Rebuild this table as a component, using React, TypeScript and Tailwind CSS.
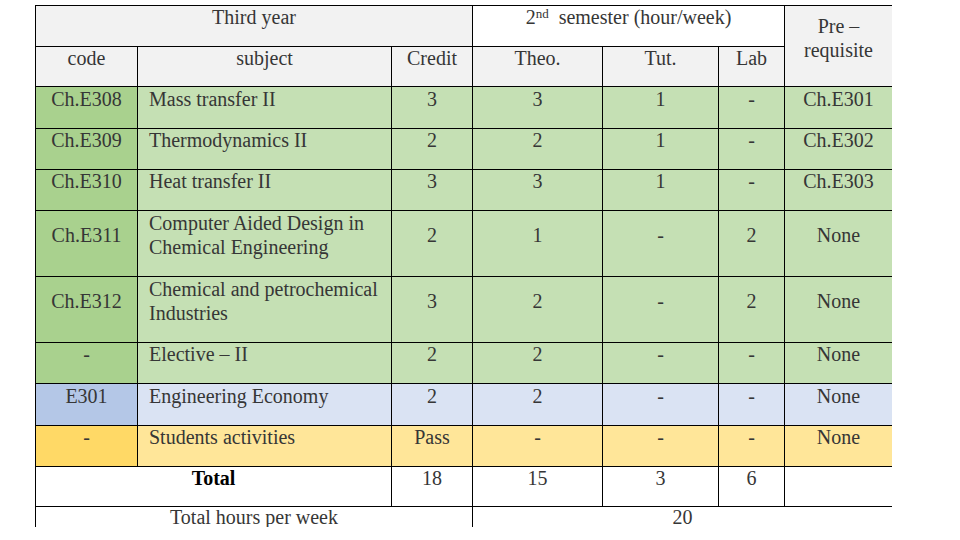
import React from "react";

type Row = {
  code: string;
  subject: string[];
  credit: string;
  theo: string;
  tut: string;
  lab: string;
  pre: string;
  h: string;
  fit: string;
  dark: string;
  light: string;
};

const G1 = "bg-[#a9d18e]";
const G2 = "bg-[#c5e0b4]";
const ONE = "leading-[22px] pb-[18px]";
const TWO = "leading-[24px] pb-[17px]";

const rows: Row[] = [
  { code: "Ch.E308", subject: ["Mass transfer II"], credit: "3", theo: "3", tut: "1", lab: "-", pre: "Ch.E301", h: "h-[42px]", fit: ONE, dark: G1, light: G2 },
  { code: "Ch.E309", subject: ["Thermodynamics II"], credit: "2", theo: "2", tut: "1", lab: "-", pre: "Ch.E302", h: "h-[41px]", fit: ONE, dark: G1, light: G2 },
  { code: "Ch.E310", subject: ["Heat transfer II"], credit: "3", theo: "3", tut: "1", lab: "-", pre: "Ch.E303", h: "h-[41px]", fit: ONE, dark: G1, light: G2 },
  { code: "Ch.E311", subject: ["Computer Aided Design in", "Chemical Engineering"], credit: "2", theo: "1", tut: "-", lab: "2", pre: "None", h: "h-[66px]", fit: TWO, dark: G1, light: G2 },
  { code: "Ch.E312", subject: ["Chemical and petrochemical", "Industries"], credit: "3", theo: "2", tut: "-", lab: "2", pre: "None", h: "h-[66px]", fit: TWO, dark: G1, light: G2 },
  { code: "-", subject: ["Elective \u2013 II"], credit: "2", theo: "2", tut: "-", lab: "-", pre: "None", h: "h-[41px]", fit: ONE, dark: G1, light: G2 },
  { code: "E301", subject: ["Engineering Economy"], credit: "2", theo: "2", tut: "-", lab: "-", pre: "None", h: "h-[42px]", fit: ONE, dark: "bg-[#b4c7e7]", light: "bg-[#dae3f3]" },
  { code: "-", subject: ["Students activities"], credit: "Pass", theo: "-", tut: "-", lab: "-", pre: "None", h: "h-[41px]", fit: ONE, dark: "bg-[#ffd966]", light: "bg-[#ffe699]" },
];

const base = "border border-black align-middle pt-0";
const hd1 = `${base} leading-[22px] pb-[18px]`;
const hd2 = `${base} leading-[22px] pb-[17px]`;

export default function App() {
  return (
    <div
      className="w-[960px] h-[540px] bg-white pt-[5px] pl-[35px] text-[20px] text-[#363636]"
      style={{ fontFamily: '"Liberation Serif", "Times New Roman", serif' }}
    >
      <div className="w-[857px] h-[522px] overflow-hidden">
        <table className="table-fixed border-collapse w-[857px]">
          <colgroup>
            <col className="w-[102px]" />
            <col className="w-[254px]" />
            <col className="w-[81px]" />
            <col className="w-[130px]" />
            <col className="w-[116px]" />
            <col className="w-[66px]" />
            <col className="w-[108px]" />
          </colgroup>
          <tbody>
            <tr className="h-[41px]">
              <td colSpan={3} className={`${hd1} bg-[#f2f2f2] text-center`}>Third year</td>
              <td colSpan={3} className={`${hd1} bg-white text-center`}>
                2<sup className="text-[13px]">nd</sup>&nbsp;&nbsp;semester (hour/week)
              </td>
              <td rowSpan={2} className={`${base} leading-[24px] pb-[16px] bg-[#f2f2f2] text-center`}>
                <div>Pre &ndash;</div>
                <div>requisite</div>
              </td>
            </tr>
            <tr className="h-[40px]">
              <td className={`${hd2} bg-[#f2f2f2] text-center`}>code</td>
              <td className={`${hd2} bg-[#f2f2f2] text-center`}>subject</td>
              <td className={`${hd2} bg-[#f2f2f2] text-center`}>Credit</td>
              <td className={`${hd2} bg-[#f2f2f2] text-center`}>Theo.</td>
              <td className={`${hd2} bg-[#f2f2f2] text-center`}>Tut.</td>
              <td className={`${hd2} bg-[#f2f2f2] text-center`}>Lab</td>
            </tr>
            {rows.map((r, i) => (
              <tr key={i} className={r.h}>
                <td className={`${base} ${r.fit} ${r.dark} text-center`}>{r.code}</td>
                <td className={`${base} ${r.fit} ${r.light} text-left pl-[11px]`}>
                  {r.subject.map((s, j) => (
                    <div key={j}>{s}</div>
                  ))}
                </td>
                <td className={`${base} ${r.fit} ${r.light} text-center`}>{r.credit}</td>
                <td className={`${base} ${r.fit} ${r.light} text-center`}>{r.theo}</td>
                <td className={`${base} ${r.fit} ${r.light} text-center`}>{r.tut}</td>
                <td className={`${base} ${r.fit} ${r.light} text-center`}>{r.lab}</td>
                <td className={`${base} ${r.fit} ${r.light} text-center`}>{r.pre}</td>
              </tr>
            ))}
            <tr className="h-[40px]">
              <td colSpan={2} className={`${hd2} bg-white text-center font-bold text-black`}>Total</td>
              <td className={`${hd2} bg-white text-center`}>18</td>
              <td className={`${hd2} bg-white text-center`}>15</td>
              <td className={`${hd2} bg-white text-center`}>3</td>
              <td className={`${hd2} bg-white text-center`}>6</td>
              <td className={`${hd2} bg-white text-center`}></td>
            </tr>
            <tr className="h-[40px]">
              <td colSpan={3} className="border border-black align-top pt-0 leading-[20px] bg-white text-center">Total hours per week</td>
              <td colSpan={4} className="border border-black align-top pt-0 leading-[20px] bg-white text-center">20</td>
            </tr>
          </tbody>
        </table>
      </div>
    </div>
  );
}
